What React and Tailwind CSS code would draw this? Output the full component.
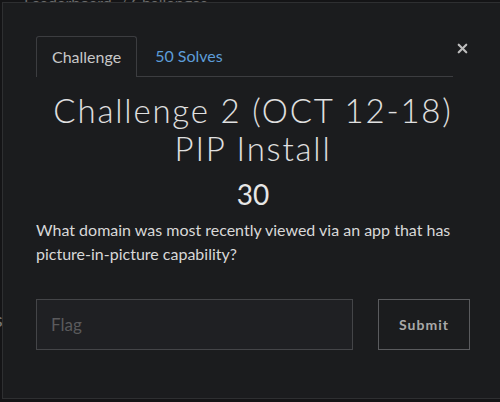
import { X } from 'lucide-react';

export default function App() {
  return (
    <div className="relative w-[500px] h-[402px] overflow-hidden bg-[#141416] font-['Lato',sans-serif]">
      {/* page behind the modal */}
      <div className="pl-[24px] -mt-[9px] text-[16px] text-[#6b6b6b] whitespace-nowrap">
        Leaderboard&nbsp;&nbsp;/ Challenges
      </div>
      <span className="absolute left-[-6px] top-[304px] text-[20px] text-[#777]">s</span>

      {/* modal */}
      <div className="absolute left-[2px] top-[2px] w-[520px] h-[397px] bg-[#1b1c1e] border border-[#2e2f31]">
        <div className="pl-[33px] pr-[51px] pt-[32px]">
          <div className="flex items-end">
            <div className="flex-1 flex items-end border-b border-[#3c3d40]">
              <div className="h-[41px] px-[15px] flex items-center border border-b-0 border-[#3c3d40] rounded-t-[3px] text-[16px] text-[#c8c8c8] -mb-px bg-[#1b1c1e]">
                Challenge
              </div>
              <div className="h-[41px] px-[18px] flex items-center text-[16px] text-[#5d9cd8]">
                50 Solves
              </div>
            </div>
            <button className="ml-[2px] mb-[21px] text-[#bdbdbd]">
              <X size={15} strokeWidth={3.5} />
            </button>
          </div>

          <h1 className="mt-[14px] text-center font-['Lato',sans-serif] font-light text-[33px] leading-[38px] tracking-[1.8px] text-[#e0e0e0]">
            Challenge 2 (OCT 12-18)
            <br />
            PIP Install
          </h1>
          <div className="mt-[10px] text-center text-[28px] leading-[34px] text-[#e6e6e6]">30</div>

          <p className="mt-[7px] text-[16px] leading-[24px] text-[#d8d8d8]">
            What domain was most recently viewed via an app that has
            <br />
            picture-in-picture capability?
          </p>

          <div className="mt-[33px] flex gap-[25px]">
            <input
              placeholder="Flag"
              className="w-[317px] h-[51px] px-[14px] bg-[#1f2023] border border-[#444548] text-[17px] text-[#ccc] placeholder:text-[#5a5a5c] outline-none font-['Lato',sans-serif]"
            />
            <button className="w-[92px] h-[51px] border border-[#5a5b5e] text-[14px] font-bold tracking-[1px] text-[#a9a9a9]">
              Submit
            </button>
          </div>
        </div>
      </div>
    </div>
  );
}
